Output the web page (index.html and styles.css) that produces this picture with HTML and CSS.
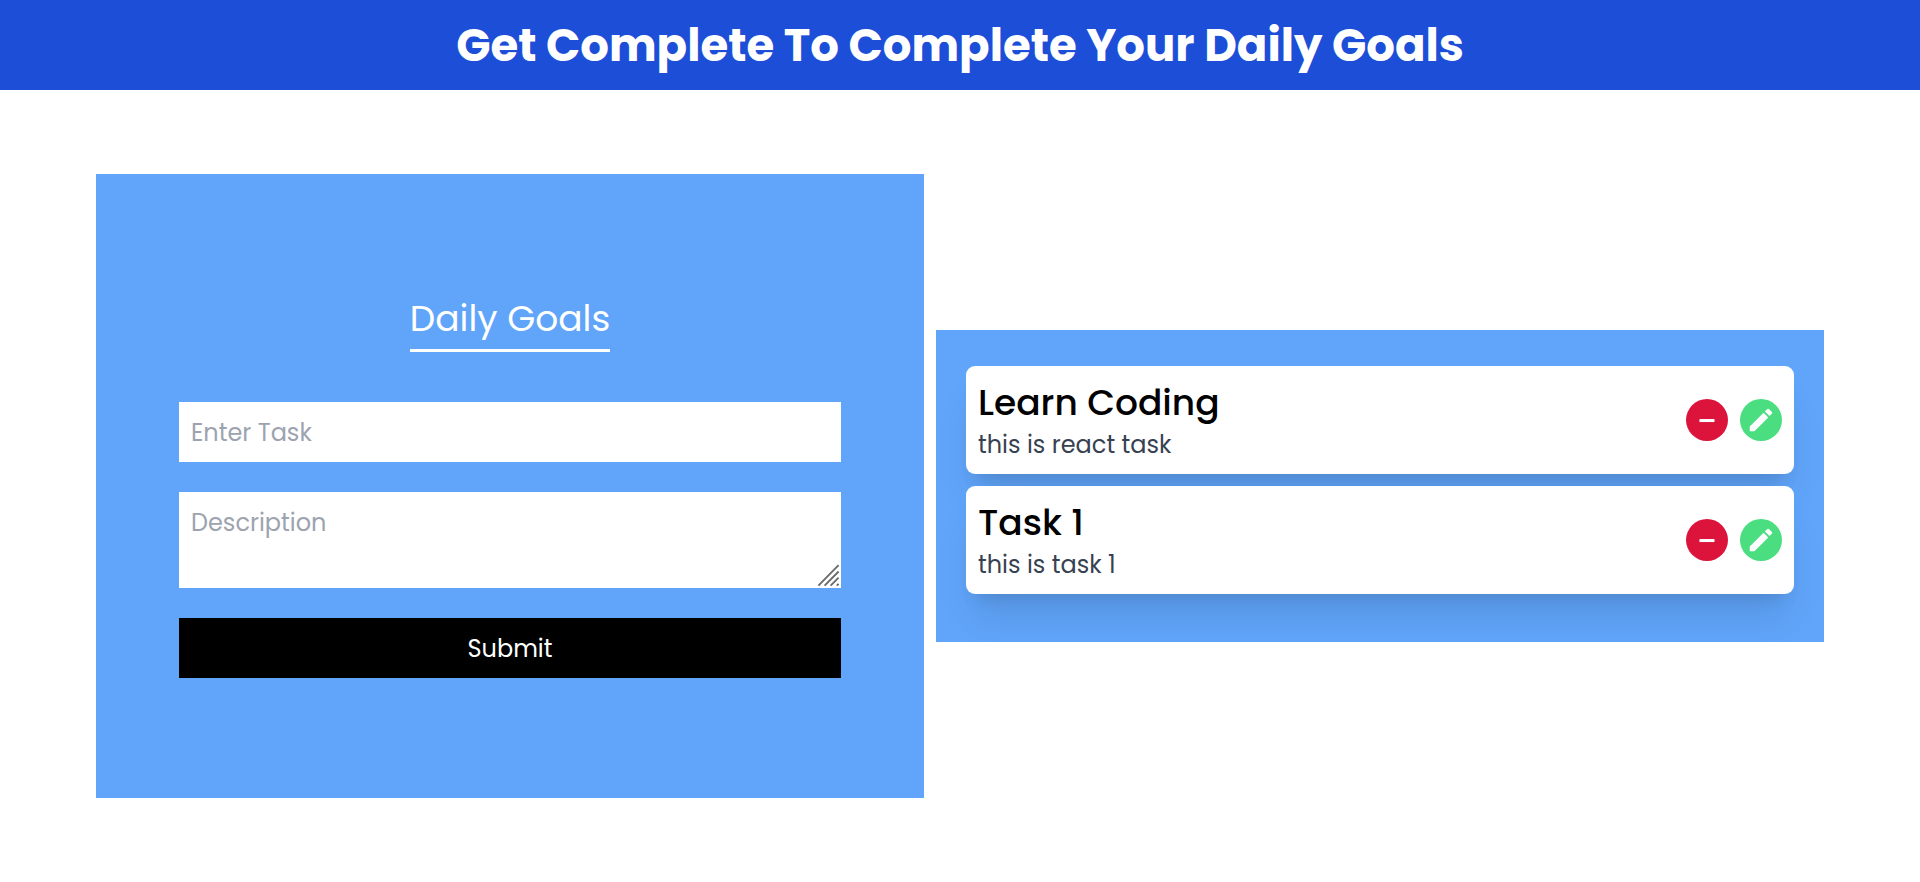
FILE: index.html
```
<!DOCTYPE html>
<html lang="en">
<head>
<meta charset="utf-8">
<title>Daily Goals</title>
<link rel="stylesheet" href="styles.css">
</head>
<body>
<header class="banner"><h1 class="banner-title">Get Complete To Complete Your Daily Goals</h1></header>
<main class="board">
  <form class="goal-form">
    <h2 class="form-title">Daily Goals</h2>
    <input class="field task-field" type="text" placeholder="Enter Task">
    <div class="description">
      <textarea class="field description-field" placeholder="Description"></textarea>
      <svg class="grip" viewBox="0 0 24 24"><path d="M1.4 21.7 21.6 1.2M7.6 21.7l14-14.2M13.6 21.7l8-8.1M19.8 21.7l1.8-1.9"/></svg>
    </div>
    <button class="submit" type="button">Submit</button>
  </form>
  <section class="task-list">
    <article class="task">
      <div class="task-text">
        <h3 class="task-title">Learn Coding</h3>
        <p class="task-note">this is react task</p>
      </div>
      <div class="actions">
        <button class="action remove" type="button" aria-label="Remove"><svg class="icon" viewBox="0 0 24 24"><path d="M4.3 10.6h14.4v2.9H4.3z"/></svg></button>
        <button class="action edit" type="button" aria-label="Edit"><svg class="icon" viewBox="0 0 24 24"><path d="M3 17.25V21h3.75L17.81 9.94l-3.75-3.75L3 17.25zM20.71 7.04a1 1 0 0 0 0-1.41l-2.34-2.34a1 1 0 0 0-1.41 0l-1.83 1.83 3.75 3.75 1.83-1.83z"/></svg></button>
      </div>
    </article>
    <article class="task">
      <div class="task-text">
        <h3 class="task-title">Task 1</h3>
        <p class="task-note">this is task 1</p>
      </div>
      <div class="actions">
        <button class="action remove" type="button" aria-label="Remove"><svg class="icon" viewBox="0 0 24 24"><path d="M4.3 10.6h14.4v2.9H4.3z"/></svg></button>
        <button class="action edit" type="button" aria-label="Edit"><svg class="icon" viewBox="0 0 24 24"><path d="M3 17.25V21h3.75L17.81 9.94l-3.75-3.75L3 17.25zM20.71 7.04a1 1 0 0 0 0-1.41l-2.34-2.34a1 1 0 0 0-1.41 0l-1.83 1.83 3.75 3.75 1.83-1.83z"/></svg></button>
      </div>
    </article>
  </section>
</main>
</body>
</html>
```
FILE: styles.css
```
* { box-sizing: border-box; }
body { margin: 0; background: #fff; font-family: Poppins, Inter, sans-serif; overflow: hidden; }
h1, h2, h3, p { margin: 0; }
button, input, textarea { font-family: inherit; border: 0; border-radius: 0; outline: 0; }

.banner { height: 90px; padding-top: 1px; background: #1d4ed8; color: #fff; text-align: center; }
.banner-title { font-size: 45px; line-height: 89px; font-weight: 700; }

.board { display: flex; align-items: center; gap: 12px; height: 792px; padding: 0 96px; }

.goal-form { width: 828px; height: 624px; padding: 120px 83px; background: #60a5fa; display: flex; flex-direction: column; }
.form-title { align-self: center; padding: 1px 0 6px; margin-bottom: 50px; border-bottom: 3px solid #fff; color: #fff; font-size: 36px; line-height: 48px; font-weight: 400; white-space: nowrap; }
.field { display: block; width: 100%; padding: 12px; background: #fff; font-size: 24px; line-height: 36px; }
.field::placeholder { color: #9ca3af; opacity: 1; }
.task-field { height: 60px; margin-bottom: 30px; }
.description { position: relative; margin-bottom: 30px; }
.description-field { height: 96px; padding-top: 13px; resize: none; }
.grip { position: absolute; right: 0; bottom: 0; width: 24px; height: 24px; fill: none; stroke: #6b6b6b; stroke-width: 1.9; pointer-events: none; }
.submit { height: 60px; padding: 1px 0 0; background: #000; color: #fff; font-size: 24px; line-height: 36px; }

.task-list { flex: 1; padding: 36px 30px 48px; background: #60a5fa; display: flex; flex-direction: column; gap: 12px; }
.task { display: flex; align-items: center; justify-content: space-between; height: 108px; padding: 12px; background: #fff; border-radius: 9px; box-shadow: 0 30px 37.5px -7.5px rgba(0, 0, 0, .1), 0 12px 15px -9px rgba(0, 0, 0, .1); }
.task-text { padding-top: 2px; }
.task-title { color: #000; font-size: 36px; line-height: 48px; font-weight: 500; }
.task-note { color: #374151; font-size: 24px; line-height: 36px; }

.actions { display: flex; gap: 12px; }
.action { display: flex; align-items: center; justify-content: center; width: 42px; height: 42px; padding: 0; border-radius: 50%; }
.remove { background: #dc143c; }
.edit { background: #4ade80; }
.icon { fill: #fff; }
.remove .icon { width: 25px; height: 25px; }
.edit .icon { width: 30px; height: 30px; }
```
